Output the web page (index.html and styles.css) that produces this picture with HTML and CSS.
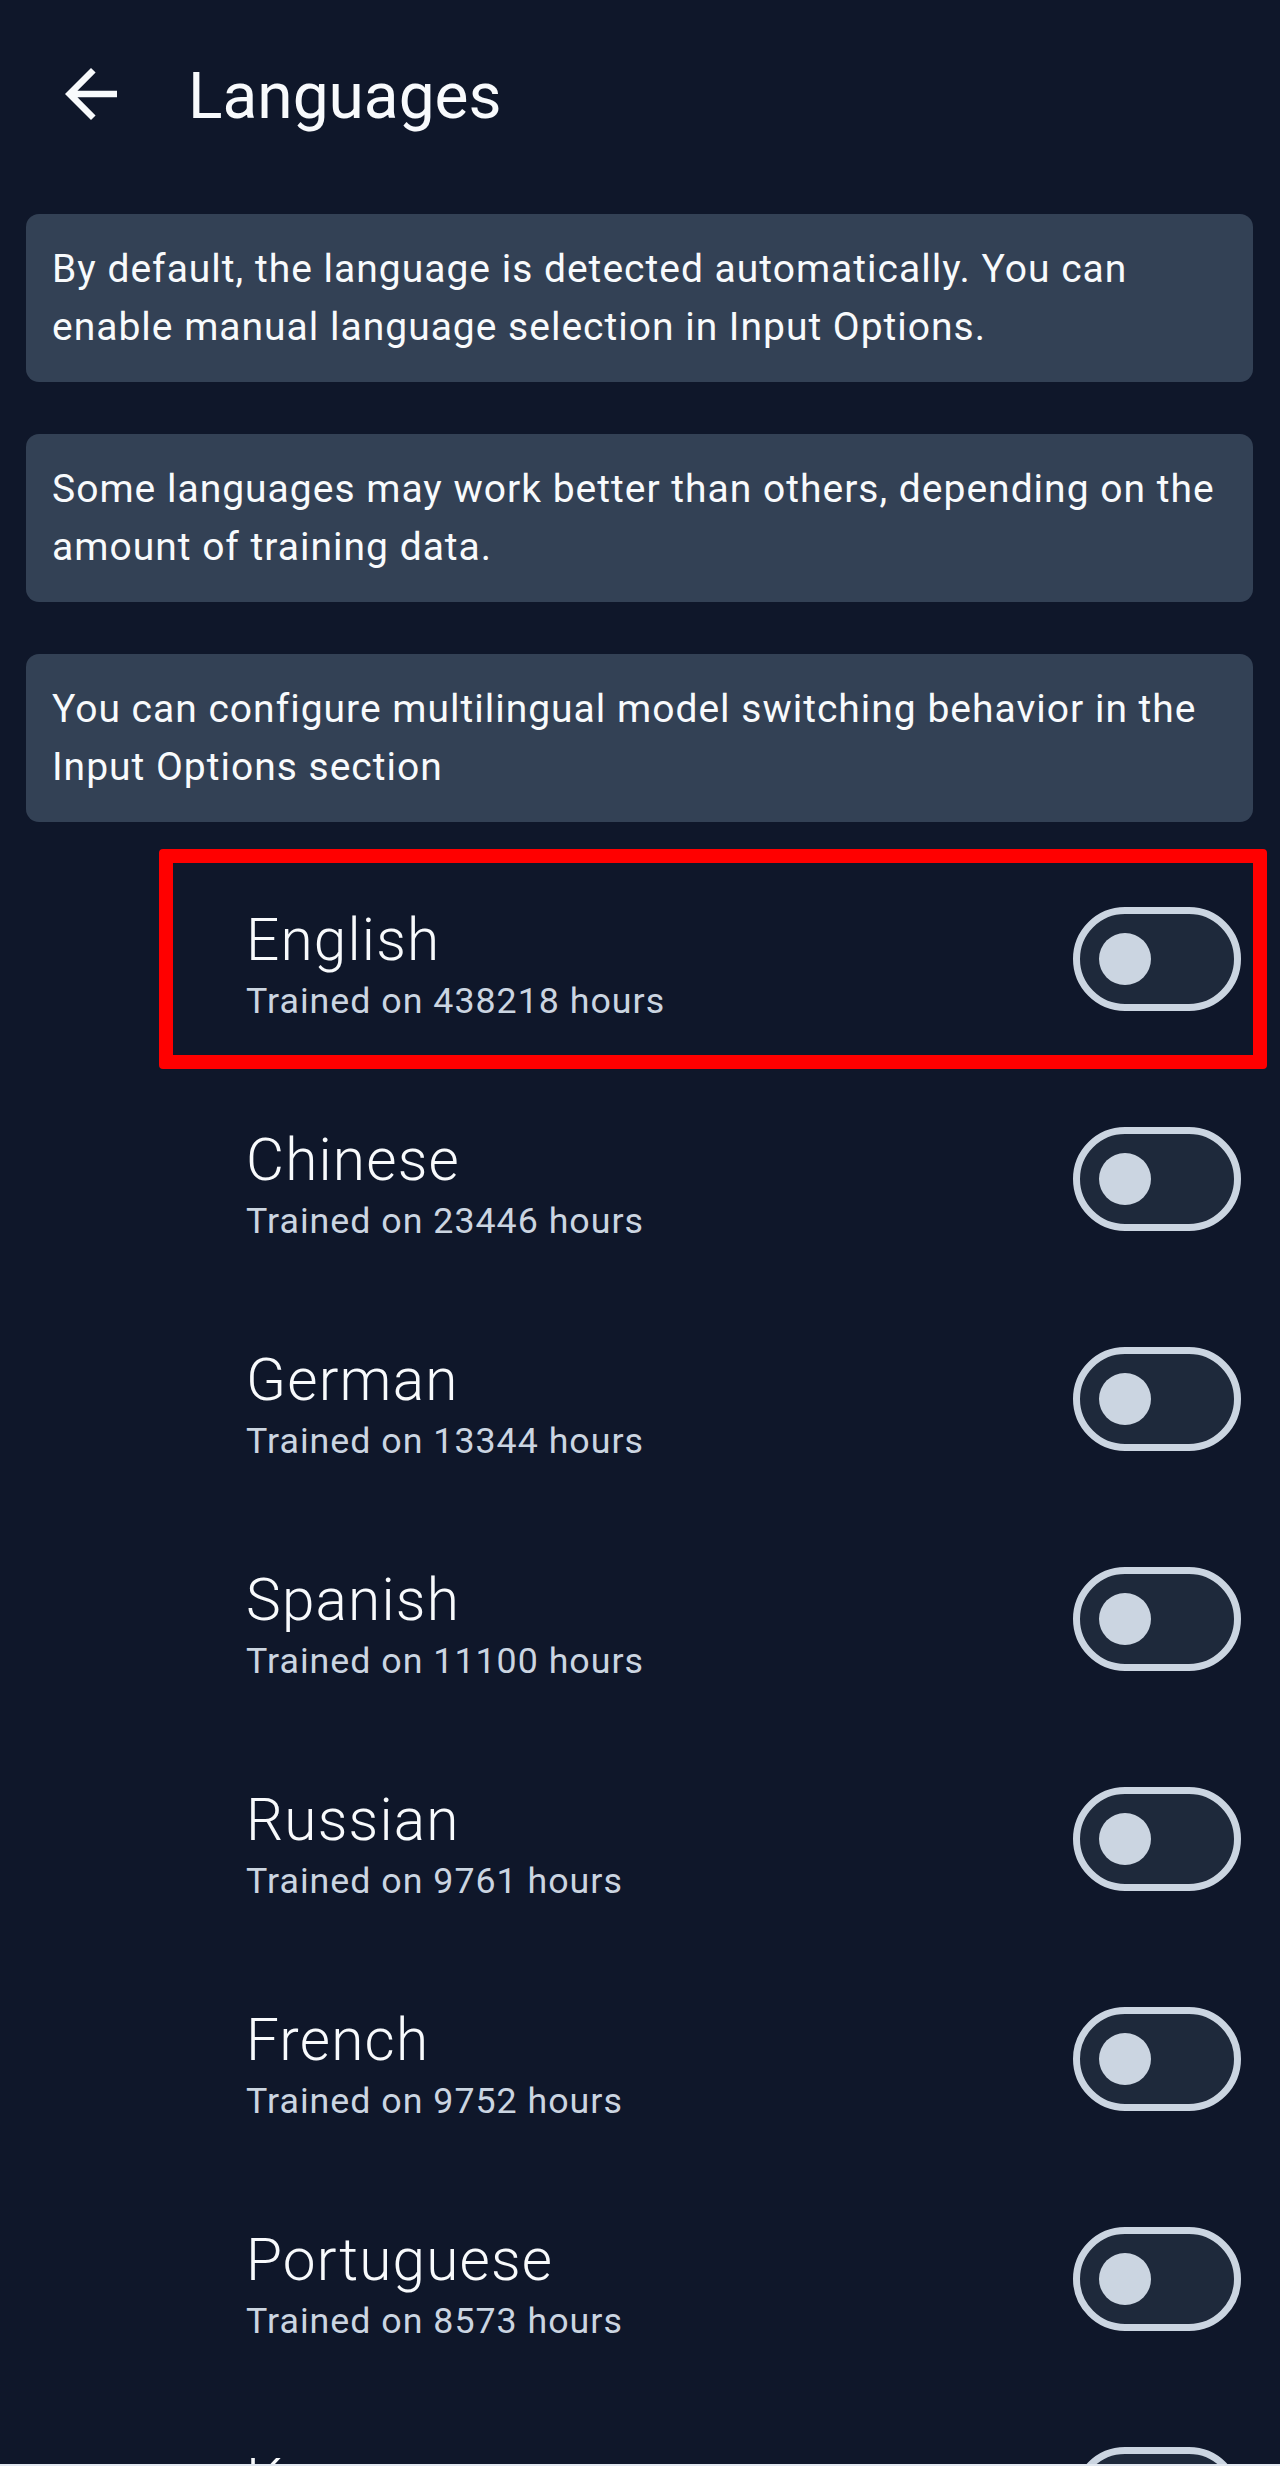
FILE: index.html
```html
<!DOCTYPE html>
<html lang="en">
<head>
  <meta charset="UTF-8">
  <title>Languages</title>
  <link rel="stylesheet" href="styles.css">
</head>
<body>

  <div class="topbar">
    <svg class="back-icon" viewBox="0 0 24 24" width="78" height="78">
      <path d="M20 11H7.83l5.59-5.59L12 4l-8 8 8 8 1.41-1.41L7.83 13H20v-2z" fill="#f8fafc"/>
    </svg>
    <h1 class="title">Languages</h1>
  </div>

  <div class="notes">
    <div class="note">By default, the language is detected automatically. You can enable manual language selection in Input Options.</div>
    <div class="note">Some languages may work better than others, depending on the amount of training data.</div>
    <div class="note">You can configure multilingual model switching behavior in the Input Options section</div>
  </div>

  <div class="lang-list">
    <div class="lang-row marked">
      <div class="lang-text">
        <div class="lang-name">English</div>
        <div class="lang-hours">Trained on 438218 hours</div>
      </div>
      <div class="switch"><span class="thumb"></span></div>
    </div>
    <div class="lang-row">
      <div class="lang-text">
        <div class="lang-name">Chinese</div>
        <div class="lang-hours">Trained on 23446 hours</div>
      </div>
      <div class="switch"><span class="thumb"></span></div>
    </div>
    <div class="lang-row">
      <div class="lang-text">
        <div class="lang-name">German</div>
        <div class="lang-hours">Trained on 13344 hours</div>
      </div>
      <div class="switch"><span class="thumb"></span></div>
    </div>
    <div class="lang-row">
      <div class="lang-text">
        <div class="lang-name">Spanish</div>
        <div class="lang-hours">Trained on 11100 hours</div>
      </div>
      <div class="switch"><span class="thumb"></span></div>
    </div>
    <div class="lang-row">
      <div class="lang-text">
        <div class="lang-name">Russian</div>
        <div class="lang-hours">Trained on 9761 hours</div>
      </div>
      <div class="switch"><span class="thumb"></span></div>
    </div>
    <div class="lang-row">
      <div class="lang-text">
        <div class="lang-name">French</div>
        <div class="lang-hours">Trained on 9752 hours</div>
      </div>
      <div class="switch"><span class="thumb"></span></div>
    </div>
    <div class="lang-row">
      <div class="lang-text">
        <div class="lang-name">Portuguese</div>
        <div class="lang-hours">Trained on 8573 hours</div>
      </div>
      <div class="switch"><span class="thumb"></span></div>
    </div>
    <div class="lang-row">
      <div class="lang-text">
        <div class="lang-name">Korean</div>
        <div class="lang-hours">Trained on 7993 hours</div>
      </div>
      <div class="switch"><span class="thumb"></span></div>
    </div>
  </div>

  <div class="nav-edge"></div>

</body>
</html>
```

FILE: styles.css
```css
body {
  margin: 0;
  background-color: #0f172a;
  color: #f8fafc;
  font-family: Roboto, "Noto Sans", sans-serif;
}

.topbar {
  display: flex;
  align-items: flex-start;
  height: 162px;
  box-sizing: border-box;
  padding: 55px 0 0 52px;
}

.back-icon {
  display: block;
  flex: none;
}

.title {
  margin: 3px 0 0 58px;
  font-size: 64px;
  font-weight: 400;
  line-height: 78px;
}

.notes {
  display: flex;
  flex-direction: column;
  gap: 52px;
  padding: 52px 27px 0 26px;
}

.note {
  background-color: #334155;
  border-radius: 13px;
  padding: 26px 24px 26px 26px;
  font-size: 39px;
  line-height: 58px;
  letter-spacing: 1px;
}

.lang-list {
  margin: 27px 13px 0 159px;
}

.lang-row {
  position: relative;
  display: flex;
  align-items: center;
  justify-content: space-between;
  height: 220px;
  padding: 0 26px 0 87px;
}

.lang-row.marked::after {
  content: "";
  position: absolute;
  inset: 0;
  border: 14px solid #ff0000;
  border-radius: 4px;
}

.lang-text {
  margin-top: 16px;
}

.lang-name {
  font-size: 58.5px;
  font-weight: 300;
  line-height: 68px;
  letter-spacing: 1.2px;
}

.lang-hours {
  font-size: 35.75px;
  line-height: 54px;
  letter-spacing: 1px;
  color: #cbd5e1;
}

.switch {
  display: flex;
  align-items: center;
  width: 168px;
  height: 104px;
  box-sizing: border-box;
  padding-left: 19px;
  border: 7px solid #cbd5e1;
  border-radius: 52px;
  background-color: #1e293b;
}

.thumb {
  width: 52px;
  height: 52px;
  border-radius: 50%;
  background-color: #cbd5e1;
}

.nav-edge {
  position: fixed;
  left: 0;
  right: 0;
  bottom: 0;
  height: 2px;
  background-color: #e2e8f0;
}
```
